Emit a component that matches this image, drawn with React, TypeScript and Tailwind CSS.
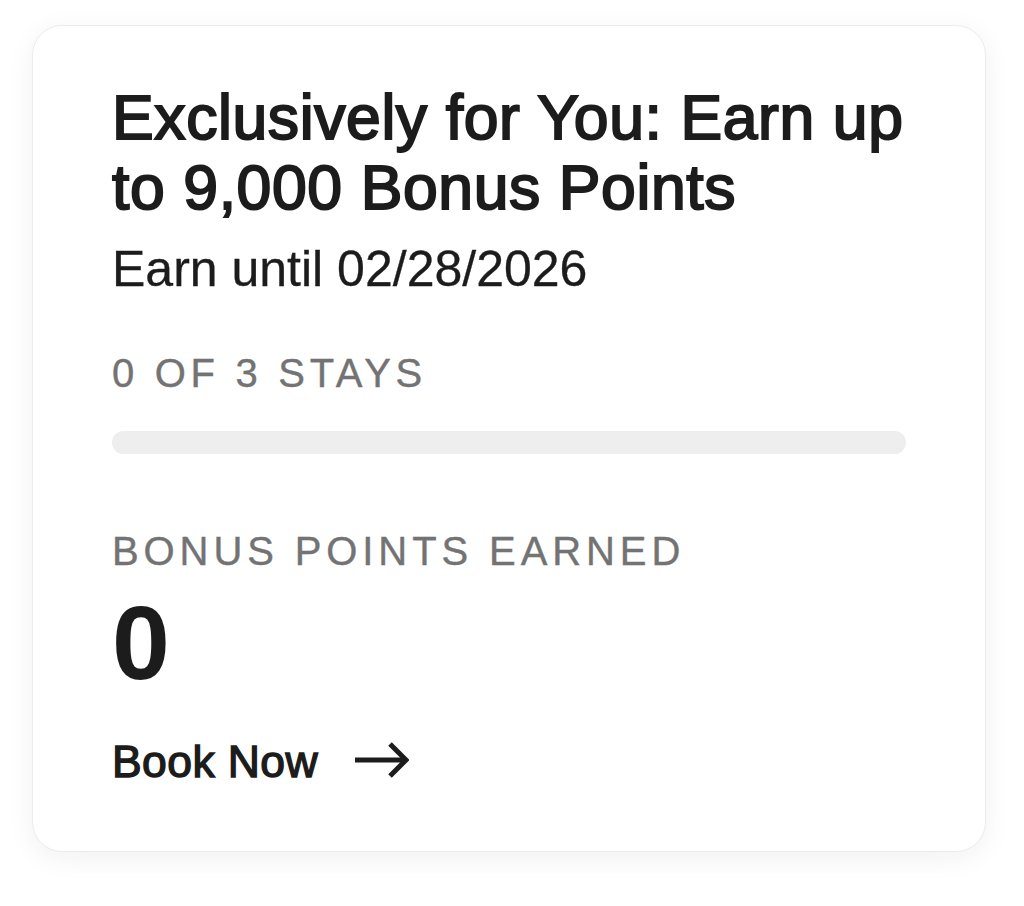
import React from "react";

export default function App() {
  return (
    <div className="min-h-[906px] w-[1024px] bg-white pl-[32px] pt-[25px]" style={{ fontFamily: '"Liberation Sans", Arial, sans-serif' }}>
      <div className="w-[954px] h-[827px] rounded-[30px] border border-[#ececec] bg-white shadow-[0_6px_28px_rgba(0,0,0,0.06)] pl-[79px] pr-[60px] pt-[56px] pb-[64px] flex flex-col">
        <h1 className="text-[62.5px] leading-[70px] font-normal tracking-[0.6px] text-[#1c1c1c] [-webkit-text-stroke:2px_#1c1c1c]">
          Exclusively for You: Earn up to 9,000 Bonus Points
        </h1>
        <p className="mt-[17px] text-[50px] leading-[60px] text-[#1c1c1c] [-webkit-text-stroke:0.3px_#1c1c1c]">Earn until 02/28/2026</p>
        <div className="mt-[50px] text-[40px] leading-[48px] tracking-[4.7px] text-[#737373] [-webkit-text-stroke:0.4px_#737373]">0 OF 3 STAYS</div>
        <div className="mt-[34px] h-[23px] w-[794px] rounded-full bg-[#eeeeee]" />
        <div className="mt-[73px] text-[40px] leading-[48px] tracking-[4.9px] text-[#737373] [-webkit-text-stroke:0.4px_#737373]">BONUS POINTS EARNED</div>
        <div className="mt-[16px] text-[104px] leading-[104px] font-bold text-[#1c1c1c]">0</div>
        <div className="mt-[43px] flex items-center gap-[37px]">
          <span className="text-[44.5px] leading-[48px] font-normal tracking-[0.4px] text-[#1c1c1c] [-webkit-text-stroke:1.4px_#1c1c1c]">Book Now</span>
          <svg width="54" height="36" viewBox="0 0 54 36" fill="none" className="mt-[-4px]">
            <path d="M0 18H50" stroke="#1c1c1c" strokeWidth="5" />
            <path d="M35 2L51 18L35 34" stroke="#1c1c1c" strokeWidth="5" strokeLinejoin="miter" />
          </svg>
        </div>
      </div>
    </div>
  );
}
